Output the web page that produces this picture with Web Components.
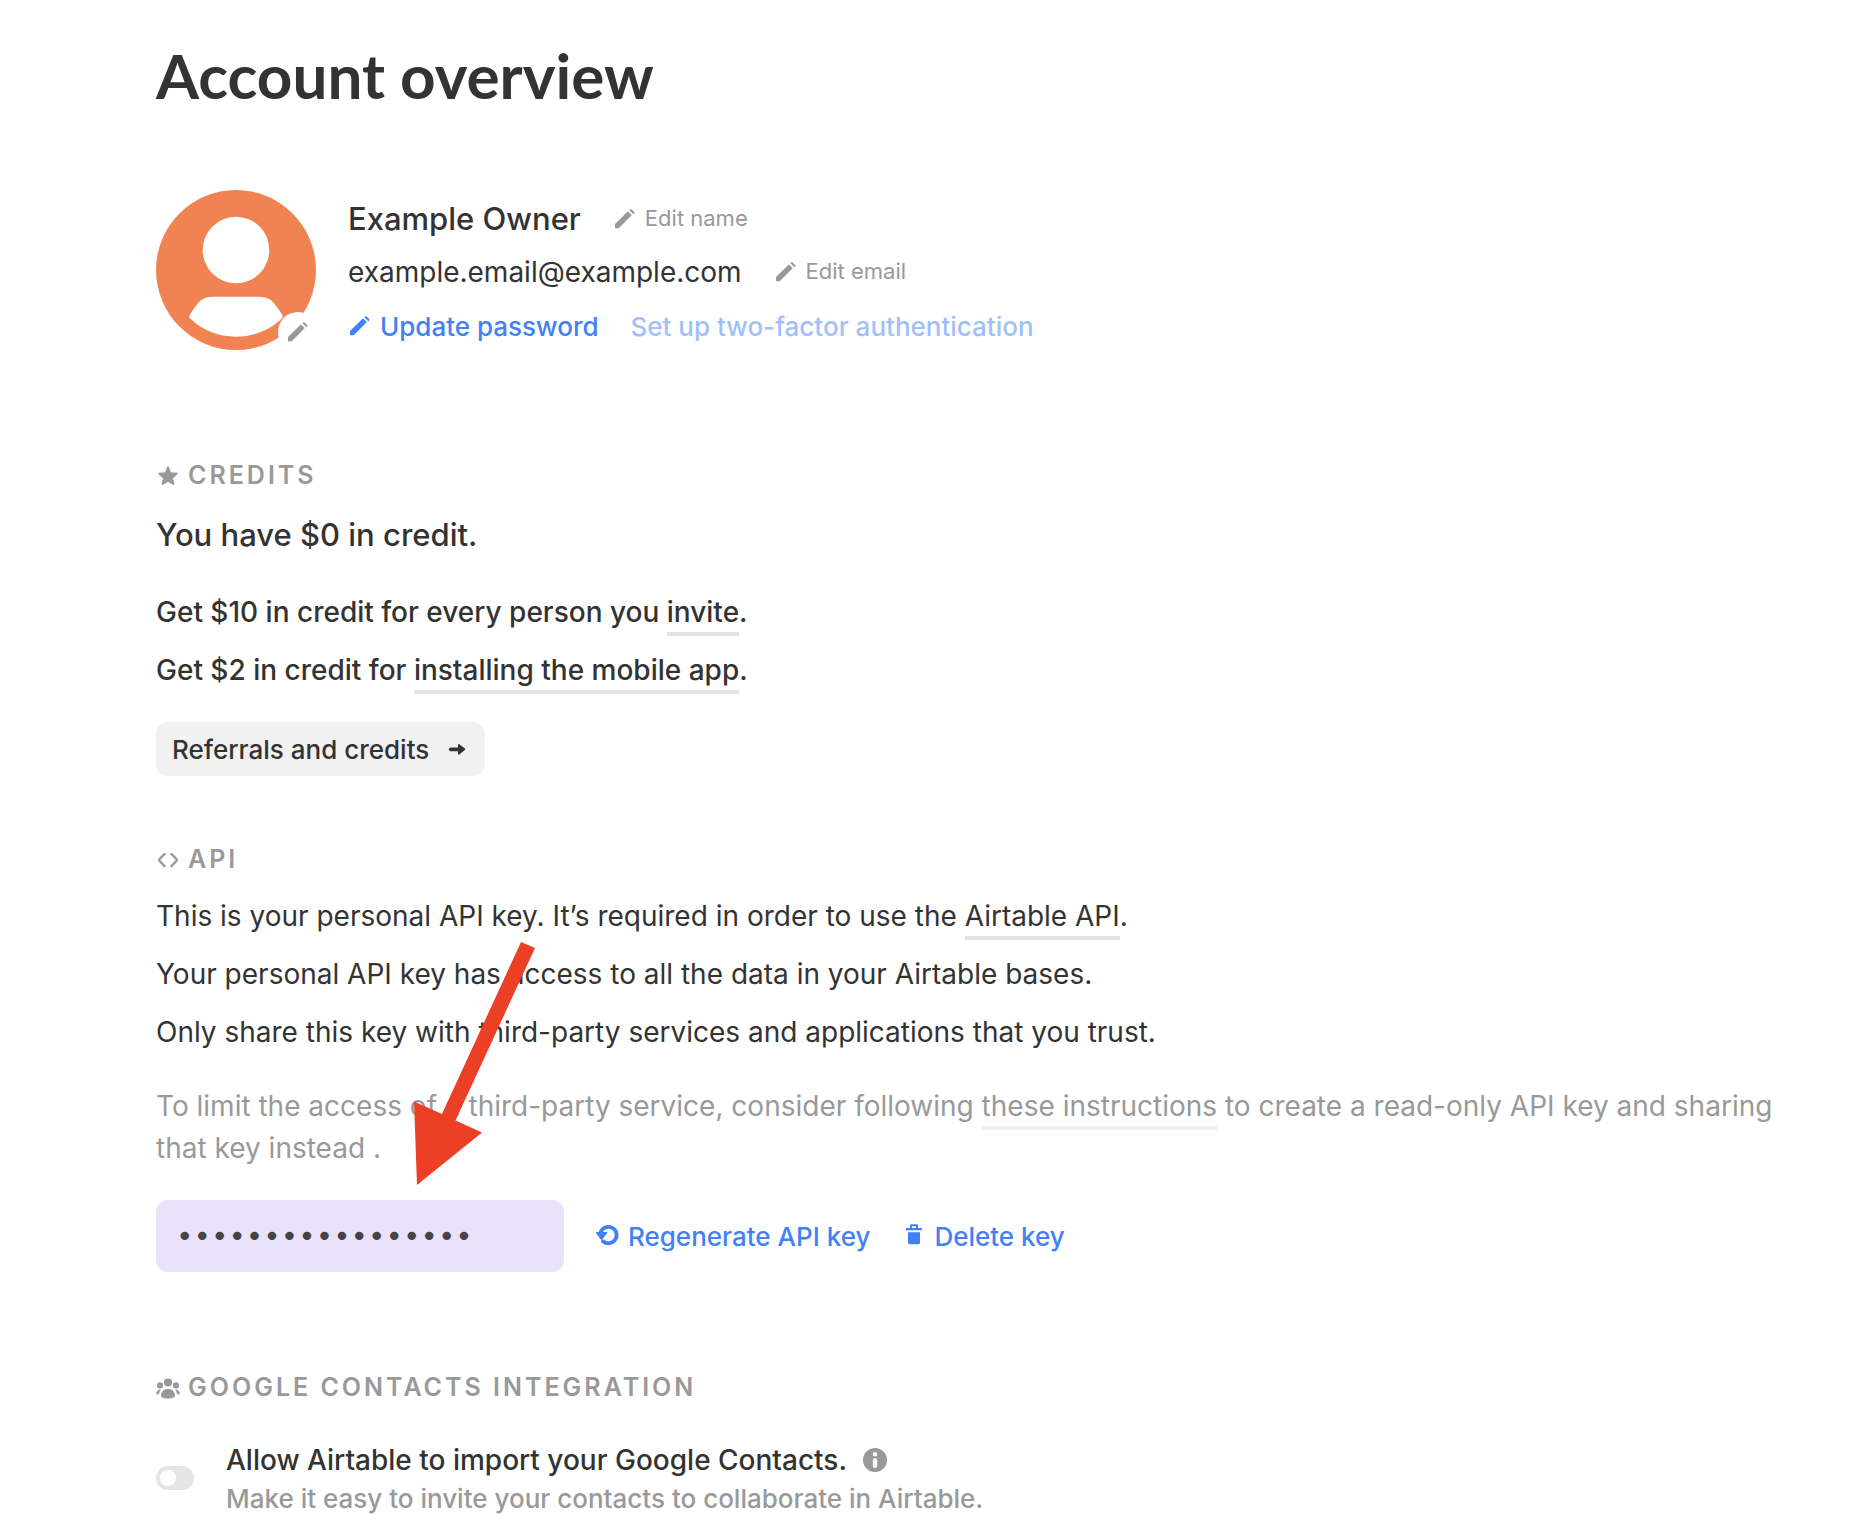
<!DOCTYPE html>
<html lang="en">
<head>
<meta charset="utf-8">
<meta name="viewport" content="width=device-width, initial-scale=1">
<title>Account overview</title>
<style>
  :root {
    --text: #333;
    --muted: #999;
    --blue: #4281f5;
    --line: #e3e3e3;
    --fs-name: 31px;
    --fs-body: 28px;
    --fs-ui: 26px;
    --fs-heading: 25px;
    --fs-small: 22px;
  }
  body {
    margin: 0;
    background: #fff;
    color: var(--text);
    font-family: Inter, "Liberation Sans", sans-serif;
    font-size: var(--fs-body);
    line-height: 42px;
  }
  p { margin: 0; }
  .stack { display: flex; flex-direction: column; gap: 16px; }
  .lead { font-size: var(--fs-name); line-height: 48px; font-weight: 500; margin-bottom: 16px; }
  .strong { font-weight: 500; }
  .muted { color: var(--muted); margin-top: 16px; --line: #f0f0f0; }
  .actions { display: flex; align-items: center; flex-wrap: wrap; gap: 32px; margin-top: 31px; }
</style>
</head>
<body>

<account-page heading="Account overview">
  <profile-card name="Example Owner" email="example.email@example.com"></profile-card>

  <account-section icon="star" heading="Credits">
    <div class="stack">
      <p class="lead">You have $0 in credit.</p>
      <p class="strong">Get $10 in credit for every person you <text-link href="#invite">invite</text-link>.</p>
      <p class="strong">Get $2 in credit for <text-link href="#mobile">installing the mobile app</text-link>.</p>
    </div>
    <div class="actions">
      <action-button variant="filled" icon-end="arrow">Referrals and credits</action-button>
    </div>
  </account-section>

  <account-section icon="code" heading="API">
    <div class="stack">
      <p>This is your personal API key. It’s required in order to use the <text-link href="#api">Airtable API</text-link>.</p>
      <p>Your personal API key has access to all the data in your Airtable bases.</p>
      <p>Only share this key with third-party services and applications that you trust.</p>
      <p class="muted">To limit the access of a third-party service, consider following <text-link href="#instructions">these instructions</text-link> to create a read-only API key and sharing that key instead .</p>
    </div>
    <div class="actions">
      <key-field></key-field>
      <action-button icon="regenerate">Regenerate API key</action-button>
      <action-button icon="trash">Delete key</action-button>
    </div>
    <pointer-arrow slot="overlay"></pointer-arrow>
  </account-section>

  <account-section icon="people" heading="Google Contacts Integration" wide>
    <toggle-row>
      Allow Airtable to import your Google Contacts.
      <span slot="hint">Make it easy to invite your contacts to collaborate in Airtable.</span>
    </toggle-row>
  </account-section>
</account-page>

<script>
// All icons share a 24x24 box and take their colour from the text around them.
const ICONS = {
  pencil: `
    <path d="M2 21.2v-3.4c0-.5.1-.8.5-1.2L14.3 4.900c.4-.4.8-.4 1.200 0l2.700 2.700c.4.4.4.800 0 1.200L6.500 20.600c-.4.4-.8.6-1.300.6H2z"/>
    <path d="M16.300 3.100l.6-.5c.6-.5 1.300-.5 1.900.1l2.100 2.100c.6.600.6 1.300.1 1.900l-.6.600z"/>`,
  star: `
    <path stroke="currentColor" stroke-width="1.600" stroke-linejoin="round" d="M12 3l2.500 6 6.500.6-4.900 4.200 1.500 6.400L12 16.800l-5.600 3.400 1.500-6.400L3 9.600l6.500-.6z"/>`,
  code: `
    <path fill="none" stroke="currentColor" stroke-width="2.400" stroke-linecap="round" stroke-linejoin="round" d="M8.600 6L3.600 11.200c-.6.700-.6 1.200 0 1.800L8.600 18.200M15.400 6l5 5.200c.6.700.6 1.200 0 1.800l-5 5.200"/>`,
  arrow: `
    <path fill="none" stroke="currentColor" stroke-width="3.800" stroke-linecap="round" d="M5.800 12.300H14"/>
    <path d="M13 7.900c0-.9.600-1.200 1.300-.7l5.600 4.400c.5.4.5 1 0 1.400l-5.600 4.400c-.7.5-1.300.2-1.300-.7z"/>`,
  regenerate: `
    <path fill="none" stroke="currentColor" stroke-width="3.800" stroke-linecap="round" d="M4.600 8.500A8.200 8.200 0 1 1 7 17.200"/>
    <path d="M.9 8h9.400c.9 0 1.200.7.7 1.400l-4.900 6.200c-.4.500-1 .5-1.400 0L.3 9.400C-.2 8.700.1 8 .9 8z"/>`,
  trash: `
    <path fill-rule="evenodd" d="M8 1.500c0-.8.500-1.300 1.300-1.300h5.400c.8 0 1.300.5 1.300 1.300V4h4v2.200H4V4h4zm2 .7V4h4V2.200z"/>
    <path d="M6 8.200h12v10.300c0 1-.6 1.700-1.700 1.700H7.700c-1.100 0-1.700-.7-1.700-1.700z"/>`,
  people: `
    <circle cx="12" cy="6.500" r="4.100"/><circle cx="4" cy="9.400" r="3.100"/><circle cx="20" cy="9.400" r="3.100"/>
    <path d="M12 12.800c3.900 0 7 3 7 6.600 0 .8-.3 1.400-.9 1.800-1.500.9-3.700 1.300-6.100 1.300s-4.600-.4-6.100-1.300c-.6-.4-.9-1-.9-1.800 0-3.600 3.100-6.600 7-6.600z"/>
    <path d="M4.800 13.400C3.700 14.900 3.100 16.600 3 18.600L.5 18.200C.1 18.100 0 17.900 0 17.500c.2-2.200 1.900-4 4.800-4.100zM19.200 13.400c1.100 1.500 1.700 3.200 1.800 5.200l2.500-.4c.4-.1.5-.3.500-.7-.2-2.200-1.900-4-4.800-4.100z"/>`,
  info: `
    <path fill-rule="evenodd" d="M12 0a12 12 0 1 1 0 24 12 12 0 0 1 0-24zm0 4a2.200 2.200 0 1 0 0 4.400A2.200 2.200 0 0 0 12 4zm0 6a2.200 2.200 0 0 0-2.200 2.200v5.600a2.200 2.200 0 0 0 4.400 0v-5.600A2.200 2.200 0 0 0 12 10z"/>`,
};

class BaseElement extends HTMLElement {
  connectedCallback() {
    if (this.shadowRoot) return;
    this.attachShadow({ mode: 'open' }).innerHTML = this.render();
  }
  attr(name) { return this.getAttribute(name) ?? ''; }
}

customElements.define('ui-icon', class extends BaseElement {
  render() {
    return `
      <style>
        :host { display: block; flex: none; width: 24px; height: 24px; }
        svg { display: block; width: 100%; height: 100%; overflow: visible; }
      </style>
      <svg viewBox="0 0 24 24" fill="currentColor" aria-hidden="true">${ICONS[this.attr('name')]}</svg>`;
  }
});

customElements.define('text-link', class extends BaseElement {
  render() {
    return `
      <style>
        :host { display: inline; }
        a { color: inherit; text-decoration: none; border-bottom: 4px solid var(--line); padding-bottom: 3px; }
      </style>
      <a href="${this.attr('href')}"><slot></slot></a>`;
  }
});

customElements.define('action-button', class extends BaseElement {
  render() {
    const icon = n => n ? `<ui-icon name="${n}"></ui-icon>` : '';
    return `
      <style>
        :host { display: block; }
        button {
          display: flex; align-items: center; gap: 8px;
          margin: 0; padding: 0; border: 0; background: none;
          color: var(--blue); font: 500 var(--fs-ui)/39px Inter, "Liberation Sans", sans-serif;
          white-space: nowrap; cursor: pointer;
        }
        :host([variant="quiet"]) button { color: var(--muted); font-size: var(--fs-small); font-weight: 400; }
        :host([variant="pale"]) button { color: #a0c0fa; }
        :host([variant="filled"]) button {
          gap: 16px; min-height: 54px; padding: 0 16px;
          border-radius: 12px; background: #f1f1f1; color: var(--text);
        }
      </style>
      <button type="button">${icon(this.attr('icon'))}<slot></slot>${icon(this.attr('icon-end'))}</button>`;
  }
});

customElements.define('user-avatar', class extends BaseElement {
  render() {
    return `
      <style>
        :host { display: block; position: relative; flex: none; width: 160px; height: 160px; }
        svg { display: block; width: 100%; height: 100%; }
        button {
          position: absolute; right: -2px; bottom: -2px;
          display: grid; place-items: center;
          width: 40px; height: 40px; padding: 0; border: 0; border-radius: 50%;
          background: #fff; color: var(--muted); cursor: pointer;
        }
      </style>
      <svg viewBox="0 0 160 160" aria-hidden="true">
        <circle cx="80" cy="80" r="80" fill="#f08351"/>
        <g fill="#fff">
          <circle cx="80" cy="60" r="33.300"/>
          <path d="M57 106.700H103c10 0 14 4.500 18.500 11 2 3 3.500 5 4.700 7 .9 1.500.8 2.600-.4 3.900C114 140 98 146.700 80 146.700S46 140 34.200 128.600c-1.200-1.300-1.300-2.400-.4-3.900 1.200-2 2.700-4 4.700-7 4.500-6.500 8.500-11 18.500-11z"/>
        </g>
      </svg>
      <button type="button" aria-label="Edit photo"><ui-icon name="pencil"></ui-icon></button>`;
  }
});

customElements.define('profile-card', class extends BaseElement {
  render() {
    return `
      <style>
        :host { display: flex; align-items: center; gap: 32px; }
        .row { display: flex; align-items: center; flex-wrap: wrap; column-gap: 32px; }
        .name { font-size: var(--fs-name); line-height: 48px; font-weight: 500; }
        .email { margin: 8px 0 14px; }
      </style>
      <user-avatar></user-avatar>
      <div>
        <div class="row name">${this.attr('name')}
          <action-button variant="quiet" icon="pencil">Edit name</action-button>
        </div>
        <div class="row email">${this.attr('email')}
          <action-button variant="quiet" icon="pencil">Edit email</action-button>
        </div>
        <div class="row">
          <action-button icon="pencil">Update password</action-button>
          <action-button variant="pale">Set up two-factor authentication</action-button>
        </div>
      </div>`;
  }
});

customElements.define('account-section', class extends BaseElement {
  render() {
    return `
      <style>
        :host { display: block; position: relative; margin-top: 64px; }
        :host([wide]) { margin-top: 96px; }
        h2 {
          display: flex; align-items: center; gap: 8px;
          margin: 0 0 16px;
          font-size: var(--fs-heading); line-height: 39px; font-weight: 600;
          letter-spacing: 3px; text-transform: uppercase; color: var(--muted);
        }
        :host([wide]) h2 { margin-bottom: 32px; }
      </style>
      <h2><ui-icon name="${this.attr('icon')}"></ui-icon>${this.attr('heading')}</h2>
      <slot></slot>
      <slot name="overlay"></slot>`;
  }
});

customElements.define('key-field', class extends BaseElement {
  render() {
    return `
      <style>
        :host { display: block; width: 408px; }
        input {
          display: block; box-sizing: border-box; width: 100%; height: 72px;
          margin: 0; padding: 0 20px; border: 0; border-radius: 12px;
          background: #eae2fb; color: #444;
          font: 29px "DejaVu Sans Mono", monospace;
        }
      </style>
      <input type="password" aria-label="API key" value="keyXXXXXXXXXXXXXX" readonly>`;
  }
});

// Annotation drawn over the section, pointing at the key field.
customElements.define('pointer-arrow', class extends BaseElement {
  render() {
    return `
      <style>
        :host { position: absolute; left: 258px; top: 102px; width: 121px; height: 243px; pointer-events: none; }
        svg { display: block; width: 100%; height: 100%; }
      </style>
      <svg viewBox="0 0 121 243" aria-hidden="true">
        <path fill="#ec4026" d="M107 0L121 6 41.500 178.500 68 190.500 3 243 0 159.500 28 172z"/>
      </svg>`;
  }
});

customElements.define('toggle-row', class extends BaseElement {
  render() {
    return `
      <style>
        :host { display: flex; align-items: center; gap: 32px; }
        input {
          appearance: none; display: block; flex: none; box-sizing: border-box;
          width: 38px; height: 24px; margin: 0; padding: 4px;
          border-radius: 12px; background: #e5e5e5; cursor: pointer;
        }
        input::before { content: ""; display: block; width: 16px; height: 16px; border-radius: 50%; background: #fff; }
        input:checked { background: #20c933; }
        input:checked::before { margin-left: auto; }
        .title { display: flex; align-items: center; gap: 16px; font-weight: 500; }
        .hint { font-size: var(--fs-ui); line-height: 36px; font-weight: 500; color: var(--muted); }
        ui-icon { color: var(--muted); }
      </style>
      <input type="checkbox" role="switch" id="toggle">
      <div>
        <div class="title"><label for="toggle"><slot></slot></label><ui-icon name="info"></ui-icon></div>
        <div class="hint"><slot name="hint"></slot></div>
      </div>`;
  }
});

customElements.define('account-page', class extends BaseElement {
  render() {
    return `
      <style>
        :host { display: block; padding: 35px 88px 15px 156px; }
        h1 {
          margin: 0 0 75px;
          font: 700 62px/80px Lato, "Open Sans", sans-serif;
        }
        ::slotted(profile-card) { margin-bottom: 106px; }
        ::slotted([icon="star"]) { margin-top: 0; }
      </style>
      <h1>${this.attr('heading')}</h1>
      <slot></slot>`;
  }
});
</script>
</body>
</html>
